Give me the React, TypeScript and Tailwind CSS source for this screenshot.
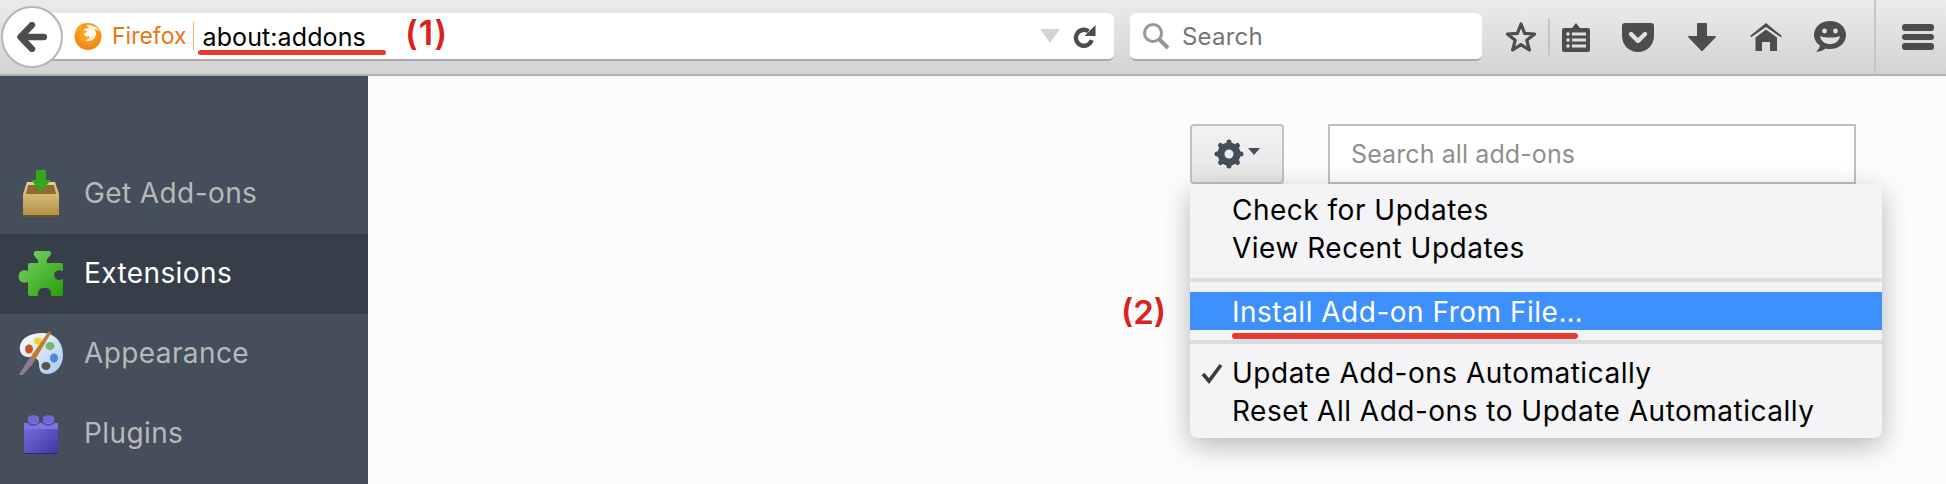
const uiFont = "font-['Inter','Noto_Sans',sans-serif]"

function FirefoxLogo() {
  return (
    <svg width="28" height="28" viewBox="0 0 28 28" className="shrink-0">
      <defs>
        <radialGradient id="fx" cx="0.5" cy="0.4" r="0.7">
          <stop offset="0" stopColor="#ffb52e" />
          <stop offset="1" stopColor="#ea7a10" />
        </radialGradient>
      </defs>
      <circle cx="14" cy="14.5" r="13.5" fill="url(#fx)" />
      <path d="M12 3 C17 2 24 5 26 10 C24 8 22 7 20 7 C22 9 23 12 21 15 C19 19 14 20 11 18 C14 18 16 16 15 14 C13 15 11 14 10 12 C12 11 13 10 13 9 C11 9 10 8 10 7 C12 7 14 6 15 5 C14 4 13 4 12 3 Z" fill="#fff" fillOpacity="0.9" />
      <path d="M1 12 C2 5 6 2 10 1 C8 3 7 5 7 7 C5 8 3 9 1 12 Z" fill="#f7a823" />
    </svg>
  )
}

function Reload() {
  return (
    <svg width="24" height="24" viewBox="0 0 24 24">
      <path d="M15.5 7.2 A8 8 0 1 0 18.6 16.2" fill="none" stroke="#4d4d4d" strokeWidth="4.4" />
      <path d="M22.5 1 V12 H11.5 Z" fill="#4d4d4d" />
    </svg>
  )
}

function ToolbarStar() {
  return (
    <svg width="32" height="32" viewBox="0 0 32 32" className="shrink-0">
      <path d="M16 3 L19.6 12.4 L29.6 13 L21.8 19.3 L24.4 29 L16 23.6 L7.6 29 L10.2 19.3 L2.4 13 L12.4 12.4 Z" fill="none" stroke="#4d4d4d" strokeWidth="3.2" strokeLinejoin="round" />
    </svg>
  )
}

function ToolbarList() {
  return (
    <svg width="28" height="30" viewBox="0 0 28 30" className="shrink-0">
      <path d="M2 6 H10 L14 1 L18 6 H26 Q28 6 28 8 V28 Q28 30 26 30 H2 Q0 30 0 28 V8 Q0 6 2 6 Z" fill="#4d4d4d" />
      <g fill="#e0e0e0">
        <circle cx="6" cy="12" r="1.8" />
        <circle cx="6" cy="18" r="1.8" />
        <circle cx="6" cy="24" r="1.8" />
        <rect x="10" y="10.5" width="14" height="3" />
        <rect x="10" y="16.5" width="14" height="3" />
        <rect x="10" y="22.5" width="14" height="3" />
      </g>
    </svg>
  )
}

function ToolbarPocket() {
  return (
    <svg width="32" height="29" viewBox="0 0 32 29" className="shrink-0">
      <path d="M3 0 H29 Q32 0 32 3 V13 C32 22 25 29 16 29 C7 29 0 22 0 13 V3 Q0 0 3 0 Z" fill="#4d4d4d" />
      <path d="M9 11 L16 18 L23 11" fill="none" stroke="#e0e0e0" strokeWidth="4.4" strokeLinecap="round" strokeLinejoin="round" />
    </svg>
  )
}

function ToolbarDownload() {
  return (
    <svg width="28" height="28" viewBox="0 0 28 28" className="shrink-0">
      <path d="M9 1 Q9 0 10 0 H18 Q19 0 19 1 V13 H27 Q28.5 13 27.5 14.5 L15 27.5 Q14 28.5 13 27.5 L0.5 14.5 Q-0.5 13 1 13 H9 Z" fill="#4d4d4d" />
    </svg>
  )
}

function ToolbarHome() {
  return (
    <svg width="32" height="28" viewBox="0 0 32 28" className="shrink-0">
      <path d="M0 13 L16 0 L32 13 L30.5 14 L16 4 L1.5 14 Z" fill="#4d4d4d" />
      <path d="M16 6.5 L27 14.5 V28 H20 V19 H12 V28 H5.5 V14.5 Z" fill="#4d4d4d" />
    </svg>
  )
}

function ToolbarChat() {
  return (
    <svg width="32" height="32" viewBox="0 0 32 32" className="shrink-0">
      <path d="M16 0 C25 0 32 6 32 14 C32 22 25 28 16 28 C14.5 28 13 27.8 11.6 27.4 C8.5 29.5 5.5 30.5 2 31 C4 29 5.5 27 6 24.5 C2.4 22 0 18.3 0 14 C0 6 7 0 16 0 Z" fill="#4d4d4d" />
      <circle cx="10.5" cy="10" r="2.4" fill="#e0e0e0" />
      <circle cx="21.5" cy="10" r="2.4" fill="#e0e0e0" />
      <path d="M6 15 C10 17 22 17 26 15 C25 20.5 21 23 16 23 C11 23 7 20.5 6 15 Z" fill="#e0e0e0" />
    </svg>
  )
}

function GetAddonsIcon() {
  return (
    <svg width="40" height="48" viewBox="0 0 40 48">
      <defs>
        <linearGradient id="box" x1="0" y1="0" x2="0" y2="1">
          <stop offset="0" stopColor="#ecd08e" />
          <stop offset="1" stopColor="#b08f47" />
        </linearGradient>
      </defs>
      <path d="M6 12 H34 L38 24 V46 H2 V24 Z" fill="url(#box)" />
      <path d="M7 15 H33 L35 24 H5 Z" fill="#8a6d33" />
      <rect x="2" y="45" width="36" height="2" fill="#6e5526" />
      <path d="M15 0 H25 V10 H30 L20 22 L10 10 H15 Z" fill="#37a61b" />
    </svg>
  )
}

function ExtensionsIcon() {
  return (
    <svg width="46" height="46" viewBox="0 0 46 46">
      <defs>
        <linearGradient id="puzzle" x1="0" y1="0" x2="1" y2="1">
          <stop offset="0" stopColor="#7ed36a" />
          <stop offset="1" stopColor="#27a007" />
        </linearGradient>
      </defs>
      <path d="M17 0 H32 Q35 3 30 7 Q28 9 29 12 H43 Q45 12 45 14 V20 Q40 18 37 21 Q35 25 38 28 Q41 30 45 28 V43 Q45 45 43 45 H33 Q34 40 30 37 Q26 36 22 38 Q19 41 20 45 H12 Q10 45 10 43 V31 Q5 33 2 30 Q-1 26 2 21 Q5 18 10 20 V14 Q10 12 12 12 H20 Q21 9 18 7 Q14 3 17 0 Z" fill="url(#puzzle)" />
    </svg>
  )
}

function AppearanceIcon() {
  return (
    <svg width="46" height="46" viewBox="0 0 46 46">
      <defs>
        <linearGradient id="palette" x1="0" y1="0" x2="1" y2="1">
          <stop offset="0" stopColor="#ffffff" />
          <stop offset="1" stopColor="#a5c8ec" />
        </linearGradient>
      </defs>
      <path d="M2 15 C3 7 13 2 24 2 C36 2 45 10 45 24 C45 36 37 43 29 43 C23 43 21 39 21 33 C21 27 16 26 10 26 C5 26 1 22 2 15 Z" fill="url(#palette)" />
      <ellipse cx="11" cy="18" rx="4" ry="4.5" fill="#c9532a" />
      <ellipse cx="20" cy="10" rx="4" ry="3.5" fill="#f2cf33" />
      <ellipse cx="32" cy="15" rx="4.5" ry="4" fill="#79b66a" />
      <ellipse cx="36" cy="27" rx="4" ry="4.5" fill="#4b8ad6" />
      <ellipse cx="28" cy="35" rx="4.5" ry="4" fill="#57534f" />
      <path d="M31 0 L33 2 L14 34 L4 44 L1 44 L9 31 Z" fill="#c47a2c" />
      <path d="M12 26 L17 29 L5 44 L1 44 Z" fill="#8d7aa0" />
    </svg>
  )
}

function PluginsIcon() {
  return (
    <svg width="36" height="40" viewBox="0 0 36 40">
      <defs>
        <linearGradient id="brick" x1="0" y1="0" x2="1" y2="1">
          <stop offset="0" stopColor="#7a72da" />
          <stop offset="1" stopColor="#3f37a8" />
        </linearGradient>
      </defs>
      <rect x="1" y="9" width="34" height="30" fill="url(#brick)" />
      <rect x="1" y="39" width="34" height="1" fill="#2d2a6e" />
      <path d="M5 3 Q10 -1 16 3 V9 H5 Z" fill="#6f67d2" />
      <path d="M20 3 Q25 -1 31 3 V9 H20 Z" fill="#6f67d2" />
      <rect x="1" y="9" width="34" height="6" fill="#7e76de" />
      <path d="M5 9 Q10 13 16 9" fill="none" stroke="#4c44b0" strokeWidth="1.5" />
      <path d="M20 9 Q25 13 31 9" fill="none" stroke="#4c44b0" strokeWidth="1.5" />
    </svg>
  )
}

function SidebarItem({ icon, label, active }: { icon: React.ReactNode; label: string; active?: boolean }) {
  return (
    <div className={`flex h-[80px] items-center ${active ? 'bg-[#363f49] text-white' : 'text-[#b8b8b8]'}`}>
      <div className="flex w-[84px] shrink-0 justify-center pr-[2px]">{icon}</div>
      <span className="mb-[3px] text-[28px] leading-none tracking-[0.4px]">{label}</span>
    </div>
  )
}

function MenuItem({ label, checked }: { label: string; checked?: boolean }) {
  return (
    <div className="relative flex h-[38px] items-center pl-[42px] pt-[2px] text-[28px] leading-none tracking-[0.5px] text-black">
      {checked && (
        <svg width="22" height="22" viewBox="0 0 22 22" className="absolute left-[11px] top-[9px]">
          <path d="M2 12 L8 19 L20 3" fill="none" stroke="#3c3c3c" strokeWidth="3.6" />
        </svg>
      )}
      {label}
    </div>
  )
}

export default function App() {
  return (
    <div className={`flex h-[484px] w-[1946px] flex-col overflow-hidden bg-[#fcfcfc] ${uiFont}`}>
      <div className="relative flex h-[76px] shrink-0 items-center border-b-2 border-[#b3b3b3] bg-gradient-to-b from-[#ebebeb] to-[#d3d3d3] pl-px">
        <div className="z-10 flex h-[62px] w-[62px] shrink-0 items-center justify-center rounded-full border-2 border-[#b4b4b4] bg-white">
          <svg width="30" height="30" viewBox="0 0 30 30">
            <path d="M15 3 L3.5 15 L15 27 M4.5 15 H27" fill="none" stroke="#4d4d4d" strokeWidth="6.4" strokeLinecap="round" strokeLinejoin="round" />
          </svg>
        </div>
        <div className="relative ml-[-33px] flex h-[48px] w-[1084px] shrink-0 items-center rounded-r-[6px] border-b-2 border-[#ababab] bg-white pl-[44px]">
          <FirefoxLogo />
          <span className="ml-[10px] text-[23px] leading-none text-[#e8780f]">Firefox</span>
          <div className="ml-[6px] h-[28px] w-px bg-[#eeb070]" />
          <span className="ml-[9px] pt-[3px] text-[25px] leading-none tracking-[0.1px] text-black">about:addons</span>
          <div className="ml-auto h-0 w-0 border-x-[10px] border-t-[14px] border-x-transparent border-t-[#d4d4d4]" />
          <div className="ml-[13px] mr-[17px]">
            <Reload />
          </div>
          <div className="absolute left-[168px] top-[37px] h-[5px] w-[188px] rounded-full bg-[#e53a2c]" />
          <span className="absolute left-[375px] top-0 text-[34px] font-semibold leading-[40px] tracking-[1px] text-[#dc2020]">(1)</span>
        </div>
        <div className="ml-[16px] flex h-[48px] w-[352px] shrink-0 items-center rounded-[6px] border-b-2 border-[#ababab] bg-white pl-[12px]">
          <svg width="28" height="28" viewBox="0 0 28 28" className="shrink-0">
            <circle cx="11" cy="11" r="8.5" fill="none" stroke="#979797" strokeWidth="3" />
            <path d="M17.5 17.5 L26 26" stroke="#979797" strokeWidth="4" />
          </svg>
          <span className="ml-[12px] pt-[2px] text-[24px] leading-none tracking-[0.2px] text-[#757575]">Search</span>
        </div>
        <div className="ml-[23px]">
          <ToolbarStar />
        </div>
        <div className="ml-[11px] h-[36px] w-[2px] shrink-0 bg-[#c4c4c4]" />
        <div className="ml-[12px]">
          <ToolbarList />
        </div>
        <div className="ml-[32px]">
          <ToolbarPocket />
        </div>
        <div className="ml-[34px]">
          <ToolbarDownload />
        </div>
        <div className="ml-[34px]">
          <ToolbarHome />
        </div>
        <div className="ml-[32px]">
          <ToolbarChat />
        </div>
        <div className="ml-[28px] w-[2px] shrink-0 self-stretch bg-[#c6c6c6]" />
        <div className="ml-[26px] flex w-[32px] shrink-0 flex-col gap-[3px]">
          <div className="h-[7px] rounded-[3px] bg-[#4d4d4d]" />
          <div className="h-[6px] rounded-[3px] bg-[#4d4d4d]" />
          <div className="h-[7px] rounded-[3px] bg-[#4d4d4d]" />
        </div>
      </div>

      <div className="flex min-h-0 flex-1">
        <div className="w-[368px] shrink-0 bg-[#444f5b] pt-[78px]">
          <SidebarItem icon={<GetAddonsIcon />} label="Get Add-ons" />
          <SidebarItem icon={<ExtensionsIcon />} label="Extensions" active />
          <SidebarItem icon={<AppearanceIcon />} label="Appearance" />
          <SidebarItem icon={<PluginsIcon />} label="Plugins" />
        </div>
        <div className="flex flex-1 justify-end pr-[90px] pt-[48px]">
          <div className="relative h-[60px] w-[94px]">
            <div className="flex h-full items-center justify-center gap-[4px] rounded-[4px] border-2 border-[#c1c1c1] bg-gradient-to-b from-[#f2f2f2] to-[#e6e6e6]">
              <svg width="30" height="30" viewBox="0 0 30 30">
                <circle cx="15" cy="15" r="8.5" fill="none" stroke="#434f5c" strokeWidth="6" />
                <path d="M15 3 V27 M3 15 H27 M6.5 6.5 L23.5 23.5 M23.5 6.5 L6.5 23.5" stroke="#434f5c" strokeWidth="5" strokeLinecap="round" />
                <circle cx="15" cy="15" r="4.5" fill="#ebebeb" />
              </svg>
              <div className="mb-[6px] h-0 w-0 border-x-[6px] border-t-[7px] border-x-transparent border-t-[#434f5c]" />
            </div>
            <div className="absolute left-0 top-full z-10 h-[254px] w-[692px] rounded-[8px] bg-[#f4f4f7] pt-[6px] shadow-[0_8px_28px_rgba(0,0,0,0.28)]">
              <MenuItem label="Check for Updates" />
              <MenuItem label="View Recent Updates" />
              <div className="mt-[12px] h-[4px] bg-[#dcdcde]" />
              <div className="mt-[10px] flex h-[38px] items-center bg-[#3e90fd] pl-[42px] pt-[2px] text-[28px] leading-none tracking-[0.5px] text-white">
                Install Add-on From File…
              </div>
              <div className="mt-[10px] h-[4px] bg-[#dcdcde]" />
              <div className="h-[9px]" />
              <MenuItem label="Update Add-ons Automatically" checked />
              <MenuItem label="Reset All Add-ons to Update Automatically" />
              <div className="absolute left-[42px] top-[149px] h-[6px] w-[346px] rounded-full bg-[#e53a2c]" />
              <span className="absolute left-[-69px] top-[108px] text-[33px] font-semibold leading-[40px] text-[#dc2020]">(2)</span>
            </div>
          </div>
          <div className="ml-[44px] flex h-[60px] w-[528px] items-center border-2 border-[#bfbfbf] bg-white pl-[21px] pt-[1px] text-[25px] leading-none tracking-[0.1px] text-[#8f8f8f]">
            Search all add-ons
          </div>
        </div>
      </div>
    </div>
  )
}
